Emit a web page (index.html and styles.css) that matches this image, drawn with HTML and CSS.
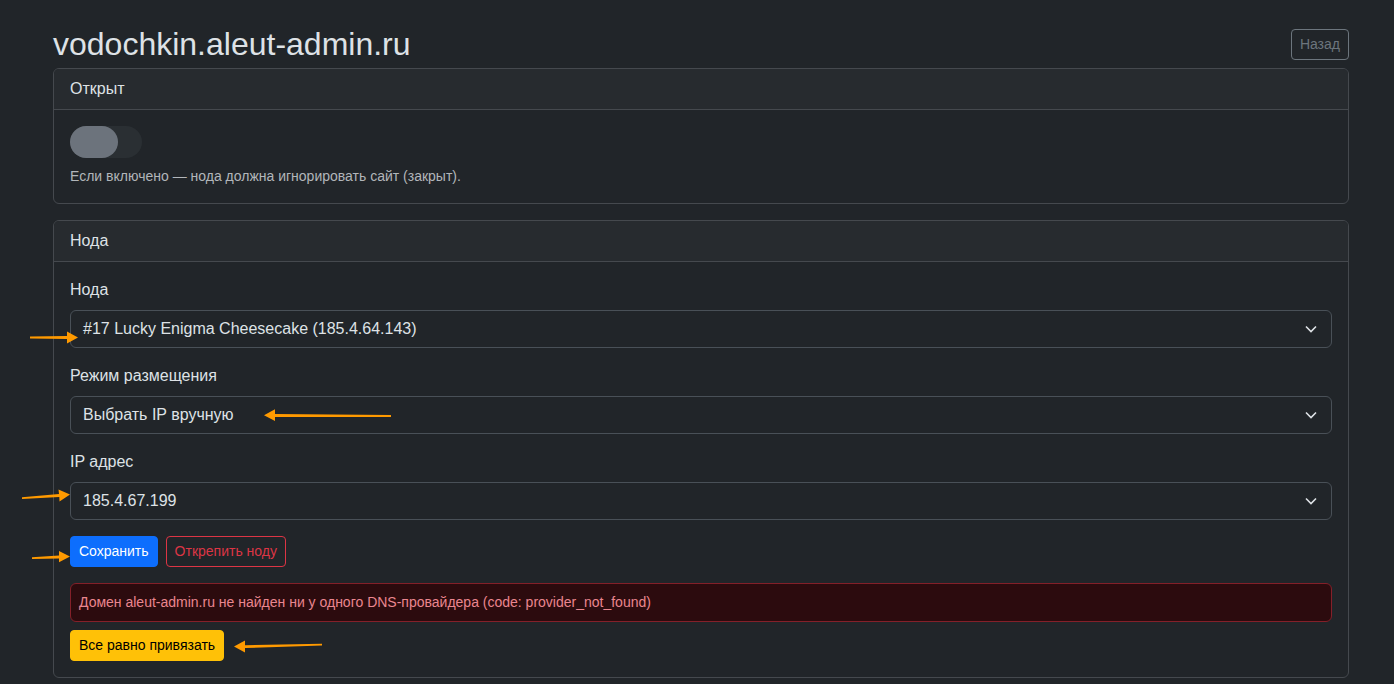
FILE: index.html
```html
<!DOCTYPE html>
<html lang="ru">
<head>
    <meta charset="UTF-8">
    <meta name="viewport" content="width=device-width, initial-scale=1.0">
    <title>vodochkin.aleut-admin.ru</title>
    <link rel="stylesheet" href="styles.css">
</head>
<body>
    <div class="page">
        <div class="topbar">
            <h2 class="title">vodochkin.aleut-admin.ru</h2>
            <button class="btn btn-sm btn-outline-secondary">Назад</button>
        </div>

        <div class="card">
            <div class="card-header">Открыт</div>
            <div class="card-body">
                <div class="switch"><span class="switch-knob"></span></div>
                <div class="form-text">Если включено — нода должна игнорировать сайт (закрыт).</div>
            </div>
        </div>

        <div class="card">
            <div class="card-header">Нода</div>
            <div class="card-body">
                <div class="field">
                    <label class="form-label">Нода</label>
                    <div class="form-select">
                        <span>#17 Lucky Enigma Cheesecake (185.4.64.143)</span>
                        <svg class="chevron" viewBox="0 0 12 8"><path d="M1 1.5 6 6.5 11 1.5"/></svg>
                    </div>
                </div>
                <div class="field">
                    <label class="form-label">Режим размещения</label>
                    <div class="form-select">
                        <span>Выбрать IP вручную</span>
                        <svg class="chevron" viewBox="0 0 12 8"><path d="M1 1.5 6 6.5 11 1.5"/></svg>
                    </div>
                </div>
                <div class="field">
                    <label class="form-label">IP адрес</label>
                    <div class="form-select">
                        <span>185.4.67.199</span>
                        <svg class="chevron" viewBox="0 0 12 8"><path d="M1 1.5 6 6.5 11 1.5"/></svg>
                    </div>
                </div>
                <div class="actions">
                    <button class="btn btn-sm btn-primary">Сохранить</button>
                    <button class="btn btn-sm btn-outline-danger">Открепить ноду</button>
                </div>
                <div class="alert alert-danger">Домен aleut-admin.ru не найден ни у одного DNS-провайдера (code: provider_not_found)</div>
                <button class="btn btn-sm btn-warning">Все равно привязать</button>
            </div>
        </div>
    </div>

    <!-- annotation arrows drawn over the screenshot -->
    <svg class="marks" viewBox="0 0 1394 684">
        <polygon points="30,336.6 67,335.9 67,331.5 78,337.5 67,343.5 67,339.1 30,338.4"/>
        <polygon points="391,415.1 275,414.1 275,409.3 264,415.2 275,421.1 275,416.9 391,416.9"/>
        <polygon points="22,497.3 59,494.1 58.5,489.6 70,494.6 59.5,501.4 59.3,497.1 22,499"/>
        <polygon points="32,557.3 59,555.6 59,551 70,556.6 59,562.2 59,558.4 32,559"/>
        <polygon points="322,643.7 245,645.2 245,640.6 234,646.6 245,652.4 245,648 322,645.5"/>
    </svg>
</body>
</html>
```

FILE: styles.css
```css
body {
    margin: 0;
    background-color: #212529;
    color: #dee2e6;
    font-family: "Liberation Sans", Arial, sans-serif;
    font-size: 16px;
    line-height: 1.5;
    position: relative;
    overflow: hidden;
    height: 684px;
}
.page {
    width: 1296px;
    margin-left: 53px;
    padding-top: 25px;
}
.topbar {
    display: flex;
    align-items: center;
    justify-content: space-between;
    margin-bottom: 5px;
}
.title {
    margin: 0;
    font-size: 32px;
    font-weight: 400;
    line-height: 38px;
    color: #dee2e6;
}
.btn {
    font-family: inherit;
    font-size: 14px;
    line-height: 21px;
    padding: 4px 8px;
    border: 1px solid transparent;
    border-radius: 4px;
    background: none;
    cursor: pointer;
}
.btn-outline-secondary {
    color: #6c757d;
    border-color: #6c757d;
}
.btn-primary {
    background-color: #0d6efd;
    border-color: #0d6efd;
    color: #fff;
}
.btn-outline-danger {
    color: #dc3545;
    border-color: #dc3545;
}
.btn-warning {
    background-color: #ffc107;
    border-color: #ffc107;
    color: #000;
}
.card {
    border: 1px solid #45494e;
    border-radius: 6px;
    margin-bottom: 16px;
    overflow: hidden;
}
.card-header {
    background-color: #272b2f;
    border-bottom: 1px solid #45494e;
    padding: 8px 16px;
}
.card-body {
    padding: 16px;
}
.switch {
    width: 72px;
    height: 32px;
    border-radius: 16px;
    background-color: #2a2f33;
}
.switch-knob {
    display: block;
    width: 48px;
    height: 32px;
    border-radius: 16px;
    background-color: #6c737c;
}
.form-text {
    margin-top: 8px;
    font-size: 14px;
    line-height: 21px;
    color: #b2b6ba;
}
.field {
    margin-bottom: 16px;
}
.form-label {
    display: block;
    margin-bottom: 8px;
}
.form-select {
    display: flex;
    align-items: center;
    justify-content: space-between;
    height: 38px;
    box-sizing: border-box;
    padding: 6px 14px 6px 12px;
    border: 1px solid #495057;
    border-radius: 6px;
}
.chevron {
    width: 12px;
    height: 8px;
    fill: none;
    stroke: #dee2e6;
    stroke-width: 1.6;
}
.actions {
    display: flex;
    gap: 8px;
}
.alert {
    margin: 16px 0 8px;
    padding: 8px;
    font-size: 14px;
    line-height: 21px;
    border: 1px solid #842029;
    border-radius: 6px;
}
.alert-danger {
    background-color: #2c0b0e;
    color: #ea868f;
}
.marks {
    position: absolute;
    left: 0;
    top: 0;
    width: 1394px;
    height: 684px;
    pointer-events: none;
    fill: #ff9a00;
}
```
